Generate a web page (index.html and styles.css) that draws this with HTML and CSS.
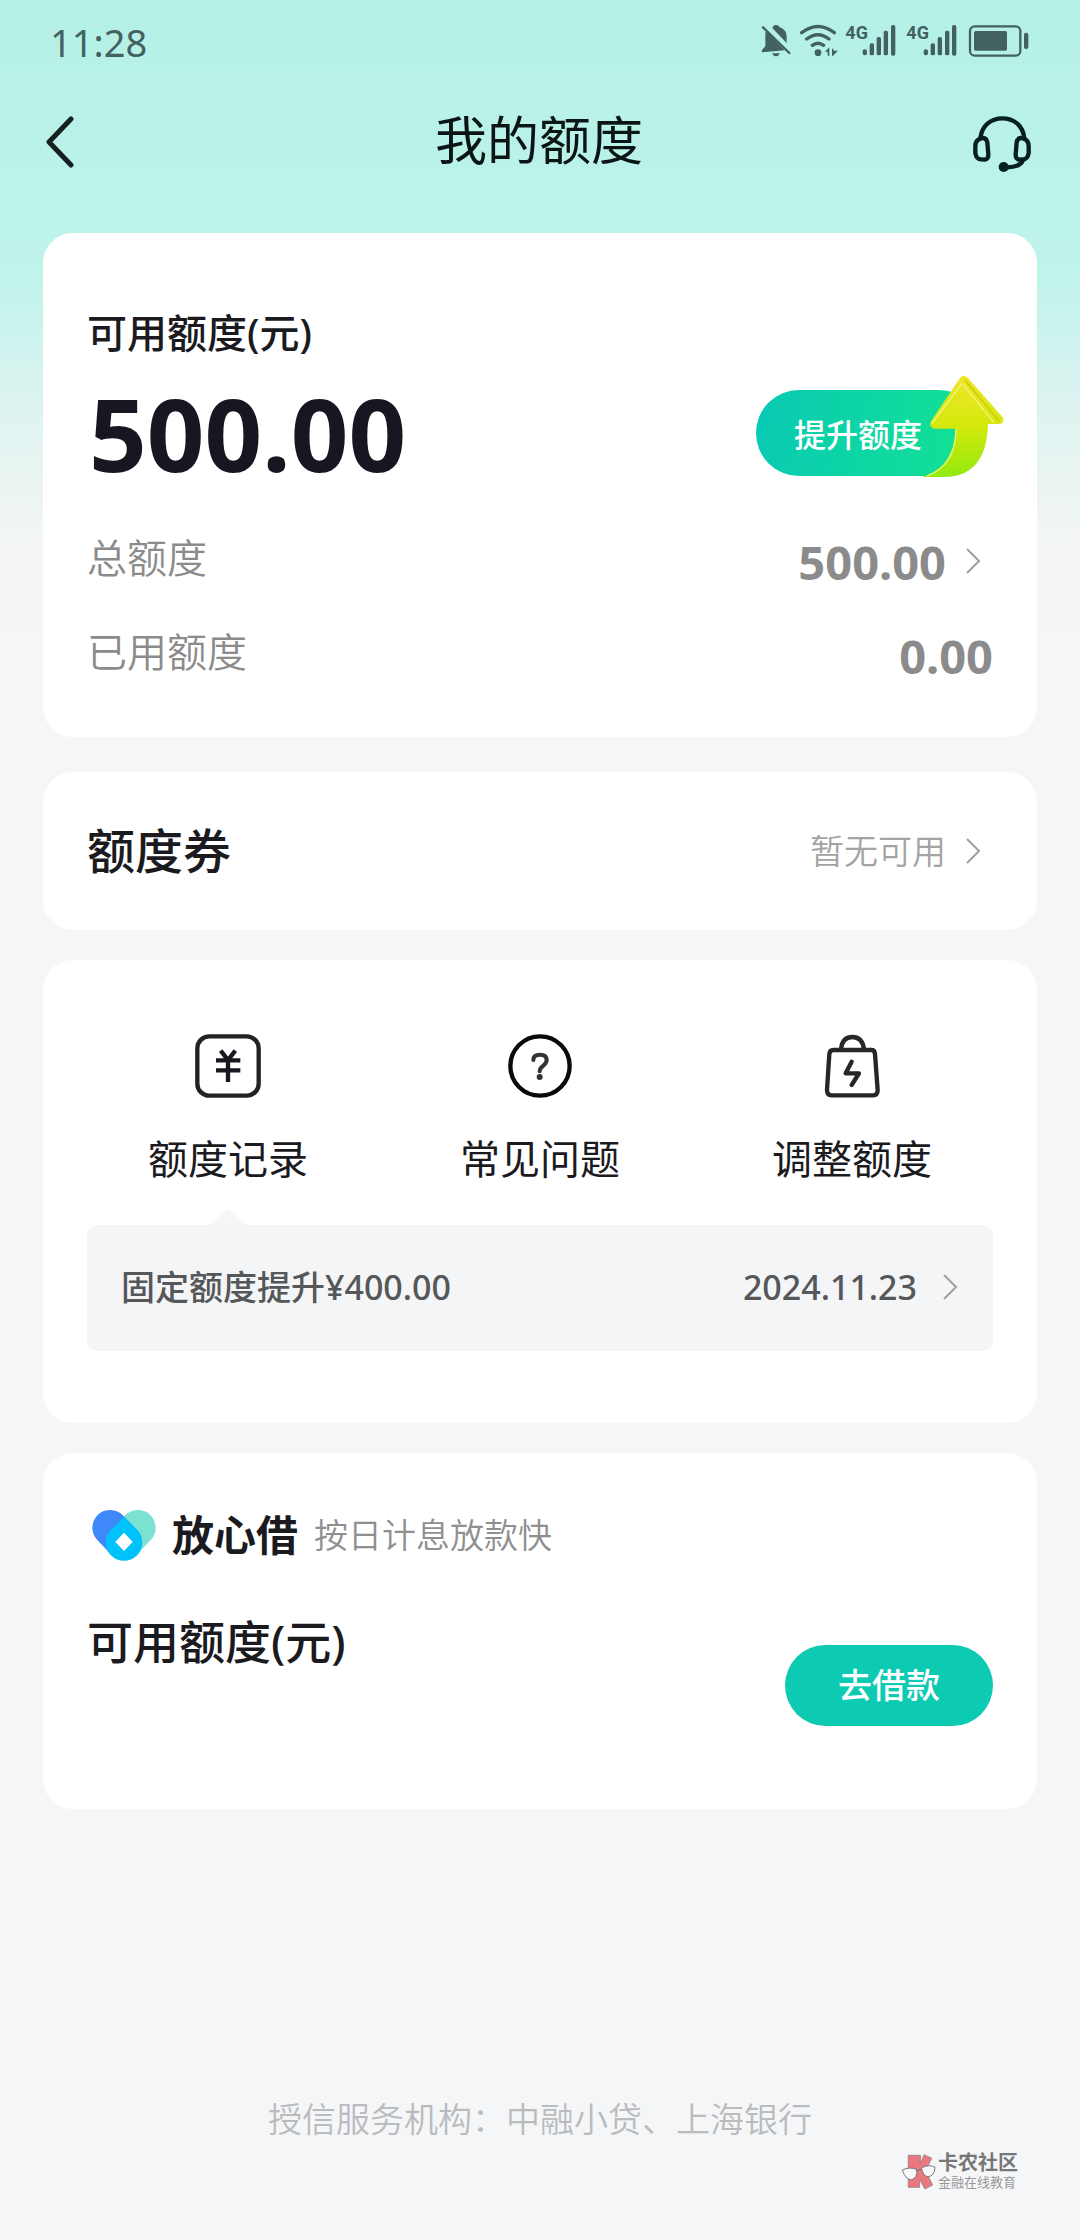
FILE: index.html
```html
<!DOCTYPE html>
<html lang="zh-CN">
<head>
<meta charset="utf-8">
<meta name="viewport" content="width=device-width, initial-scale=1">
<title>我的额度</title>
<link rel="stylesheet" href="styles.css">
</head>
<body>
<div class="page">
  <div class="status-bar">
    <time class="clock">11:28</time>
    <svg class="status-icons" viewBox="120 65 810 108" aria-hidden="true">
      <g fill="#43625f">
        <path d="M136 96L142 96L194 150L128 156Q124 156 126 149L136 138ZM156 82Q160 80 162 75Q169 72 176 76L178 80Q200 88 200 108L200 128ZM156 159H180Q176 168 168 168Q160 168 156 159Z"/>
        <circle cx="294" cy="157" r="10"/>
        <path d="M315 154L328 141V166H323V155ZM336 144L341 148V151L354 151L339 166H336Z"/>
        <rect x="428" y="147" width="13" height="18" rx="6"/><rect x="449" y="129" width="13" height="36" rx="5"/><rect x="470" y="110" width="13" height="55" rx="5"/><rect x="491" y="91" width="13" height="74" rx="5"/><rect x="513" y="74" width="13" height="92" rx="5"/>
        <rect x="611" y="147" width="13" height="18" rx="6"/><rect x="632" y="129" width="13" height="36" rx="5"/><rect x="653" y="110" width="13" height="55" rx="5"/><rect x="675" y="91" width="13" height="74" rx="5"/><rect x="696" y="74" width="13" height="92" rx="5"/>
        <rect x="762" y="92" width="99" height="59" rx="5"/><rect x="912" y="97" width="13" height="49" rx="6"/>
        <text class="net" x="376" y="115">4G</text>
        <text class="net" x="559" y="115">4G</text>
      </g>
      <g fill="none" stroke="#43625f" stroke-width="7" stroke-linecap="round">
        <path d="M129 81L208 158"/>
        <path d="M245 97Q294 60 343 97M260 116Q294 90 327 116M277 135Q294 122 311 135" stroke-width="10"/>
        <rect x="750" y="78" width="151" height="88" rx="14"/>
      </g>
    </svg>
  </div>

  <header class="nav">
    <button class="nav-button" type="button" aria-label="返回">
      <svg class="icon-back" viewBox="0 0 28 52" aria-hidden="true"><path d="M25 3L3 26L25 49" fill="none" stroke="#16201f" stroke-width="5" stroke-linecap="round" stroke-linejoin="round"/></svg>
    </button>
    <h1 class="nav-title">我的额度</h1>
    <button class="nav-button nav-button-end" type="button" aria-label="客服">
      <svg class="icon-headset" viewBox="758 346 180 174" aria-hidden="true">
        <g fill="none" stroke="#061f20" stroke-width="13" stroke-linecap="round" stroke-linejoin="round">
          <path d="M783 416C788 377 815 356 849 356S911 377 915 416"/>
          <path d="M783 417Q768 422 768 440V460Q771 479 785 479L797 480Q808 477 807 464L804 428Q801 414 790 415Z"/>
          <path d="M913 417Q928 422 928 440V460Q925 479 911 479L899 480Q888 477 889 464L892 428Q895 414 906 415Z"/>
          <path d="M911 482Q902 502 864 503"/>
        </g>
        <circle cx="853" cy="502" r="15" fill="#061f20"/>
      </svg>
    </button>
  </header>

  <main class="cards">
    <section class="card summary">
      <h2 class="label-dark">可用额度(元)</h2>
      <div class="amount-row">
        <strong class="amount">500.00</strong>
        <button class="boost" type="button">提升额度
          <svg class="boost-arrow" viewBox="605 72 252 312" aria-hidden="true">
            <defs>
              <linearGradient id="arrow" x1="0" y1="0" x2="0" y2="1"><stop offset="0" stop-color="#f0e52a"/><stop offset=".5" stop-color="#d3e90c"/><stop offset="1" stop-color="#92ea0e"/></linearGradient>
            </defs>
            <path d="M724 81Q734 74 744 82L850 202Q857 216 842 222H806Q802 381 672 381H608Q706 350 708 236H644Q628 230 635 214Z" fill="url(#arrow)"/>
            <path d="M738 92L838 212" fill="none" stroke="#cfd10c" stroke-width="6" stroke-linecap="round"/>
            <path d="M727 102L638 220M732 104L822 216" fill="none" stroke="#f3f27a" stroke-width="4" stroke-linecap="round"/>
            <path d="M710 238Q708 350 622 378" fill="none" stroke="#e0f781" stroke-width="4"/>
          </svg>
        </button>
      </div>
      <a class="row" href="#total"><span class="row-label">总额度</span><span class="row-value">500.00</span><svg class="chevron" viewBox="0 0 14 26" aria-hidden="true"><path d="M1 1L13 13L1 25"/></svg></a>
      <div class="row"><span class="row-label">已用额度</span><span class="row-value">0.00</span></div>
    </section>

    <a class="card coupon" href="#coupons">
      <h2 class="coupon-title">额度券</h2>
      <span class="coupon-state">暂无可用</span>
      <svg class="chevron" viewBox="0 0 14 26" aria-hidden="true"><path d="M1 1L13 13L1 25"/></svg>
    </a>

    <section class="card services">
      <nav class="shortcuts">
        <a class="shortcut" href="#records">
          <svg class="icon-shortcut" viewBox="405 99 198 192" aria-hidden="true"><g fill="none" stroke="#222" stroke-width="13"><rect x="412" y="106" width="184" height="178" rx="36"/><path d="M482 149L504 177L526 149M468 178H541M468 208H541M504 177V243" stroke="#17171f"/></g></svg>
          额度记录
        </a>
        <a class="shortcut" href="#faq">
          <svg class="icon-shortcut" viewBox="0 0 192 192" aria-hidden="true"><circle cx="96" cy="96" r="89" fill="none" stroke="#0a0a0a" stroke-width="13"/><path d="M76 78Q76 62 96 62Q116 62 116 78Q116 87 105 96Q95 103 95 112" fill="none" stroke="#333" stroke-width="12" stroke-linecap="round"/><circle cx="95" cy="129" r="9" fill="#333"/></svg>
          常见问题
        </a>
        <a class="shortcut" href="#adjust">
          <svg class="icon-shortcut" viewBox="844 99 192 192" aria-hidden="true"><g fill="none" stroke="#272727" stroke-width="13" stroke-linecap="round" stroke-linejoin="round"><path d="M884 147H998Q1008 147 1009 159L1017 267Q1017 283 1003 283H879Q865 283 865 267L872 159Q873 147 884 147ZM907 144Q911 108 941 108T976 144M939 182L921 217H961L939 252"/></g></svg>
          调整额度
        </a>
      </nav>
      <a class="record" href="#record"><span>固定额度提升¥400.00</span><time class="record-date">2024.11.23</time><svg class="chevron" viewBox="0 0 14 26" aria-hidden="true"><path d="M1 1L13 13L1 25"/></svg></a>
    </section>

    <section class="card loan">
      <div class="brand">
        <svg class="brand-logo" viewBox="94 208 186 150" aria-hidden="true">
          <g fill="none" stroke-width="104" stroke-linecap="round">
            <path d="M227 262L187 304" stroke="#7be2d2"/>
            <path d="M147 262L187 304" stroke="#3f88fa"/>
          </g>
          <path d="M187 230L225 268A53 53 0 1 1 149 268Z" fill="#00c2fb"/>
          <path d="M187 279L210 303L187 327L164 303Z" fill="#fff" stroke="#fff" stroke-width="4" stroke-linejoin="round"/>
        </svg>
        <strong class="brand-name">放心借</strong>
        <span class="brand-note">按日计息放款快</span>
      </div>
      <div class="loan-row">
        <h2 class="loan-title">可用额度(元)</h2>
        <button class="borrow" type="button">去借款</button>
      </div>
    </section>
  </main>

  <footer class="footer">授信服务机构：中融小贷、上海银行</footer>

  <div class="watermark">
    <svg class="watermark-logo" viewBox="28 36 106 110" aria-hidden="true">
      <path d="M50 42H87L86 67L98 40L121 51L102 89L124 132L100 144L85 115L84 139H50Z" fill="#ec7780" stroke="#777" stroke-width="2"/>
      <path d="M32 87Q54 75 76 85Q78 111 60 116Q42 116 32 87ZM90 80Q112 68 131 78Q130 104 110 107Q94 105 90 80ZM75 88L91 85" fill="#f8f8f9" stroke="#777" stroke-width="3"/>
    </svg>
    <div><div class="watermark-name">卡农社区</div><div class="watermark-note">金融在线教育</div></div>
  </div>
</div>
</body>
</html>
```
FILE: styles.css
```css
* { box-sizing: border-box; }

body {
  margin: 0;
  background: #f5f6f8;
  color: #1b1b1f;
  font-family: "Noto Sans", "Noto Sans CJK SC", sans-serif;
}

h1, h2 { margin: 0; }
a { color: inherit; text-decoration: none; }
button { border: 0; padding: 0; font-family: inherit; cursor: pointer; }
svg { display: block; flex: none; }

.page {
  position: relative;
  display: flex;
  flex-direction: column;
  min-height: 100vh;
  background: linear-gradient(#b4f0e6 0, #bdf3ea 230px, #c2f3eb 290px, #d8f3f0 380px, #e8f4f2 470px, #f3f5f6 540px, #f5f6f8 640px);
}

.status-bar {
  display: flex;
  align-items: center;
  justify-content: space-between;
  height: 80px;
  padding: 0 50px;
}
.clock { font-size: 38px; line-height: 56px; color: #43625f; padding-top: 4px; }
.status-icons { width: 270px; height: 36px; }
.net { font: bold 54px "Liberation Sans Narrow", "Roboto", sans-serif; }

.nav {
  display: grid;
  grid-template-columns: 1fr auto 1fr;
  align-items: center;
  height: 124px;
  padding: 0 48px 0 46px;
}
.nav-button { background: none; justify-self: start; }
.nav-button-end { justify-self: end; padding-top: 4px; }
.icon-back { width: 28px; height: 52px; }
.icon-headset { width: 60px; height: 58px; }
.nav-title { padding-bottom: 4px; font-size: 52px; line-height: 72px; font-weight: 400; color: #0a1514; }

.cards { padding: 29px 43px 0; }
.card {
  display: block;
  margin-bottom: 30px;
  padding: 0 44px;
  border-radius: 30px;
  background: #fff;
}

.chevron {
  width: 14px;
  height: 26px;
  margin-right: 13px;
  fill: none;
  stroke: #a0a0a0;
  stroke-width: 2;
}

.summary { margin-bottom: 35px; padding-top: 72px; padding-bottom: 38px; }
.label-dark { font-size: 40px; line-height: 56px; font-weight: 500; }
.amount-row {
  display: flex;
  align-items: center;
  justify-content: space-between;
  height: 144px;
  margin-bottom: 6px;
}
.amount { padding-left: 2px; font-size: 101px; line-height: 120px; font-weight: 700; color: #181620; }
.boost {
  position: relative;
  width: 226px;
  height: 86px;
  margin-right: 11px;
  padding-left: 38px;
  border-radius: 43px;
  background: linear-gradient(100deg, #08c9b4, #14e392);
  color: #fff;
  font-size: 32px;
  font-weight: 500;
  text-align: left;
}
.boost-arrow { position: absolute; right: -23px; bottom: -2px; width: 84px; height: 104px; }

.row { display: flex; align-items: center; height: 94px; color: #8b8b8b; }
.row-label { flex: 1; font-size: 40px; line-height: 56px; font-weight: 350; }
.row-value { padding-top: 8px; font-size: 47px; line-height: 56px; font-weight: 700; }
.row .chevron { margin-top: 6px; margin-left: 20px; }

.coupon { display: flex; align-items: center; height: 158px; }
.coupon-title { flex: 1; font-size: 48px; line-height: 72px; font-weight: 500; }
.coupon-state { font-size: 34px; line-height: 56px; font-weight: 350; color: #a3a3a3; }
.coupon .chevron { margin-left: 20px; }

.services { padding-top: 74px; padding-bottom: 72px; }
.shortcuts { display: grid; grid-template-columns: repeat(3, 1fr); margin: 0 -15px 38px; }
.shortcut {
  display: flex;
  flex-direction: column;
  align-items: center;
  gap: 33px;
  font-size: 40px;
  line-height: 56px;
}
.icon-shortcut { width: 66px; height: 64px; }
.record {
  position: relative;
  display: flex;
  align-items: center;
  height: 126px;
  padding: 0 23px 2px 34px;
  border-radius: 10px;
  background: #f4f5f7;
  color: #555759;
  font-size: 34px;
  line-height: 56px;
  font-weight: 500;
}
.record::before {
  content: "";
  position: absolute;
  left: 123px;
  top: -16px;
  border: 18px solid transparent;
  border-top: 0;
  border-bottom: 16px solid #f6f6f7;
}
.record-date { flex: 1; text-align: right; }
.record .chevron { margin-left: 26px; }

.loan { padding-top: 54px; padding-bottom: 83px; }
.brand { display: flex; align-items: center; padding-left: 5px; }
.brand-logo { width: 64px; height: 52px; }
.brand-name { margin-left: 16px; font-size: 42px; line-height: 56px; font-weight: 700; }
.brand-note { margin-left: 16px; font-size: 34px; line-height: 56px; font-weight: 350; color: #8f8f8f; }
.loan-row { display: flex; align-items: flex-end; justify-content: space-between; padding-top: 42px; }
.loan-title { align-self: flex-start; font-size: 46px; line-height: 72px; font-weight: 500; }
.borrow {
  width: 208px;
  height: 81px;
  margin-top: 40px;
  padding-bottom: 4px;
  border-radius: 41px;
  background: #0dcab3;
  color: #fff;
  font-size: 34px;
  font-weight: 500;
}

.footer {
  margin-top: auto;
  padding: 40px 0 93px;
  text-align: center;
  font-size: 34px;
  line-height: 56px;
  font-weight: 350;
  color: #b9bbbd;
}

.watermark {
  position: absolute;
  right: 62px;
  bottom: 50px;
  display: flex;
  align-items: center;
  gap: 2px;
}
.watermark-logo { width: 35px; height: 37px; }
.watermark-name { font-size: 20px; line-height: 22px; font-weight: 700; color: #777; }
.watermark-note { font-size: 13px; line-height: 16px; color: #999; }
```
